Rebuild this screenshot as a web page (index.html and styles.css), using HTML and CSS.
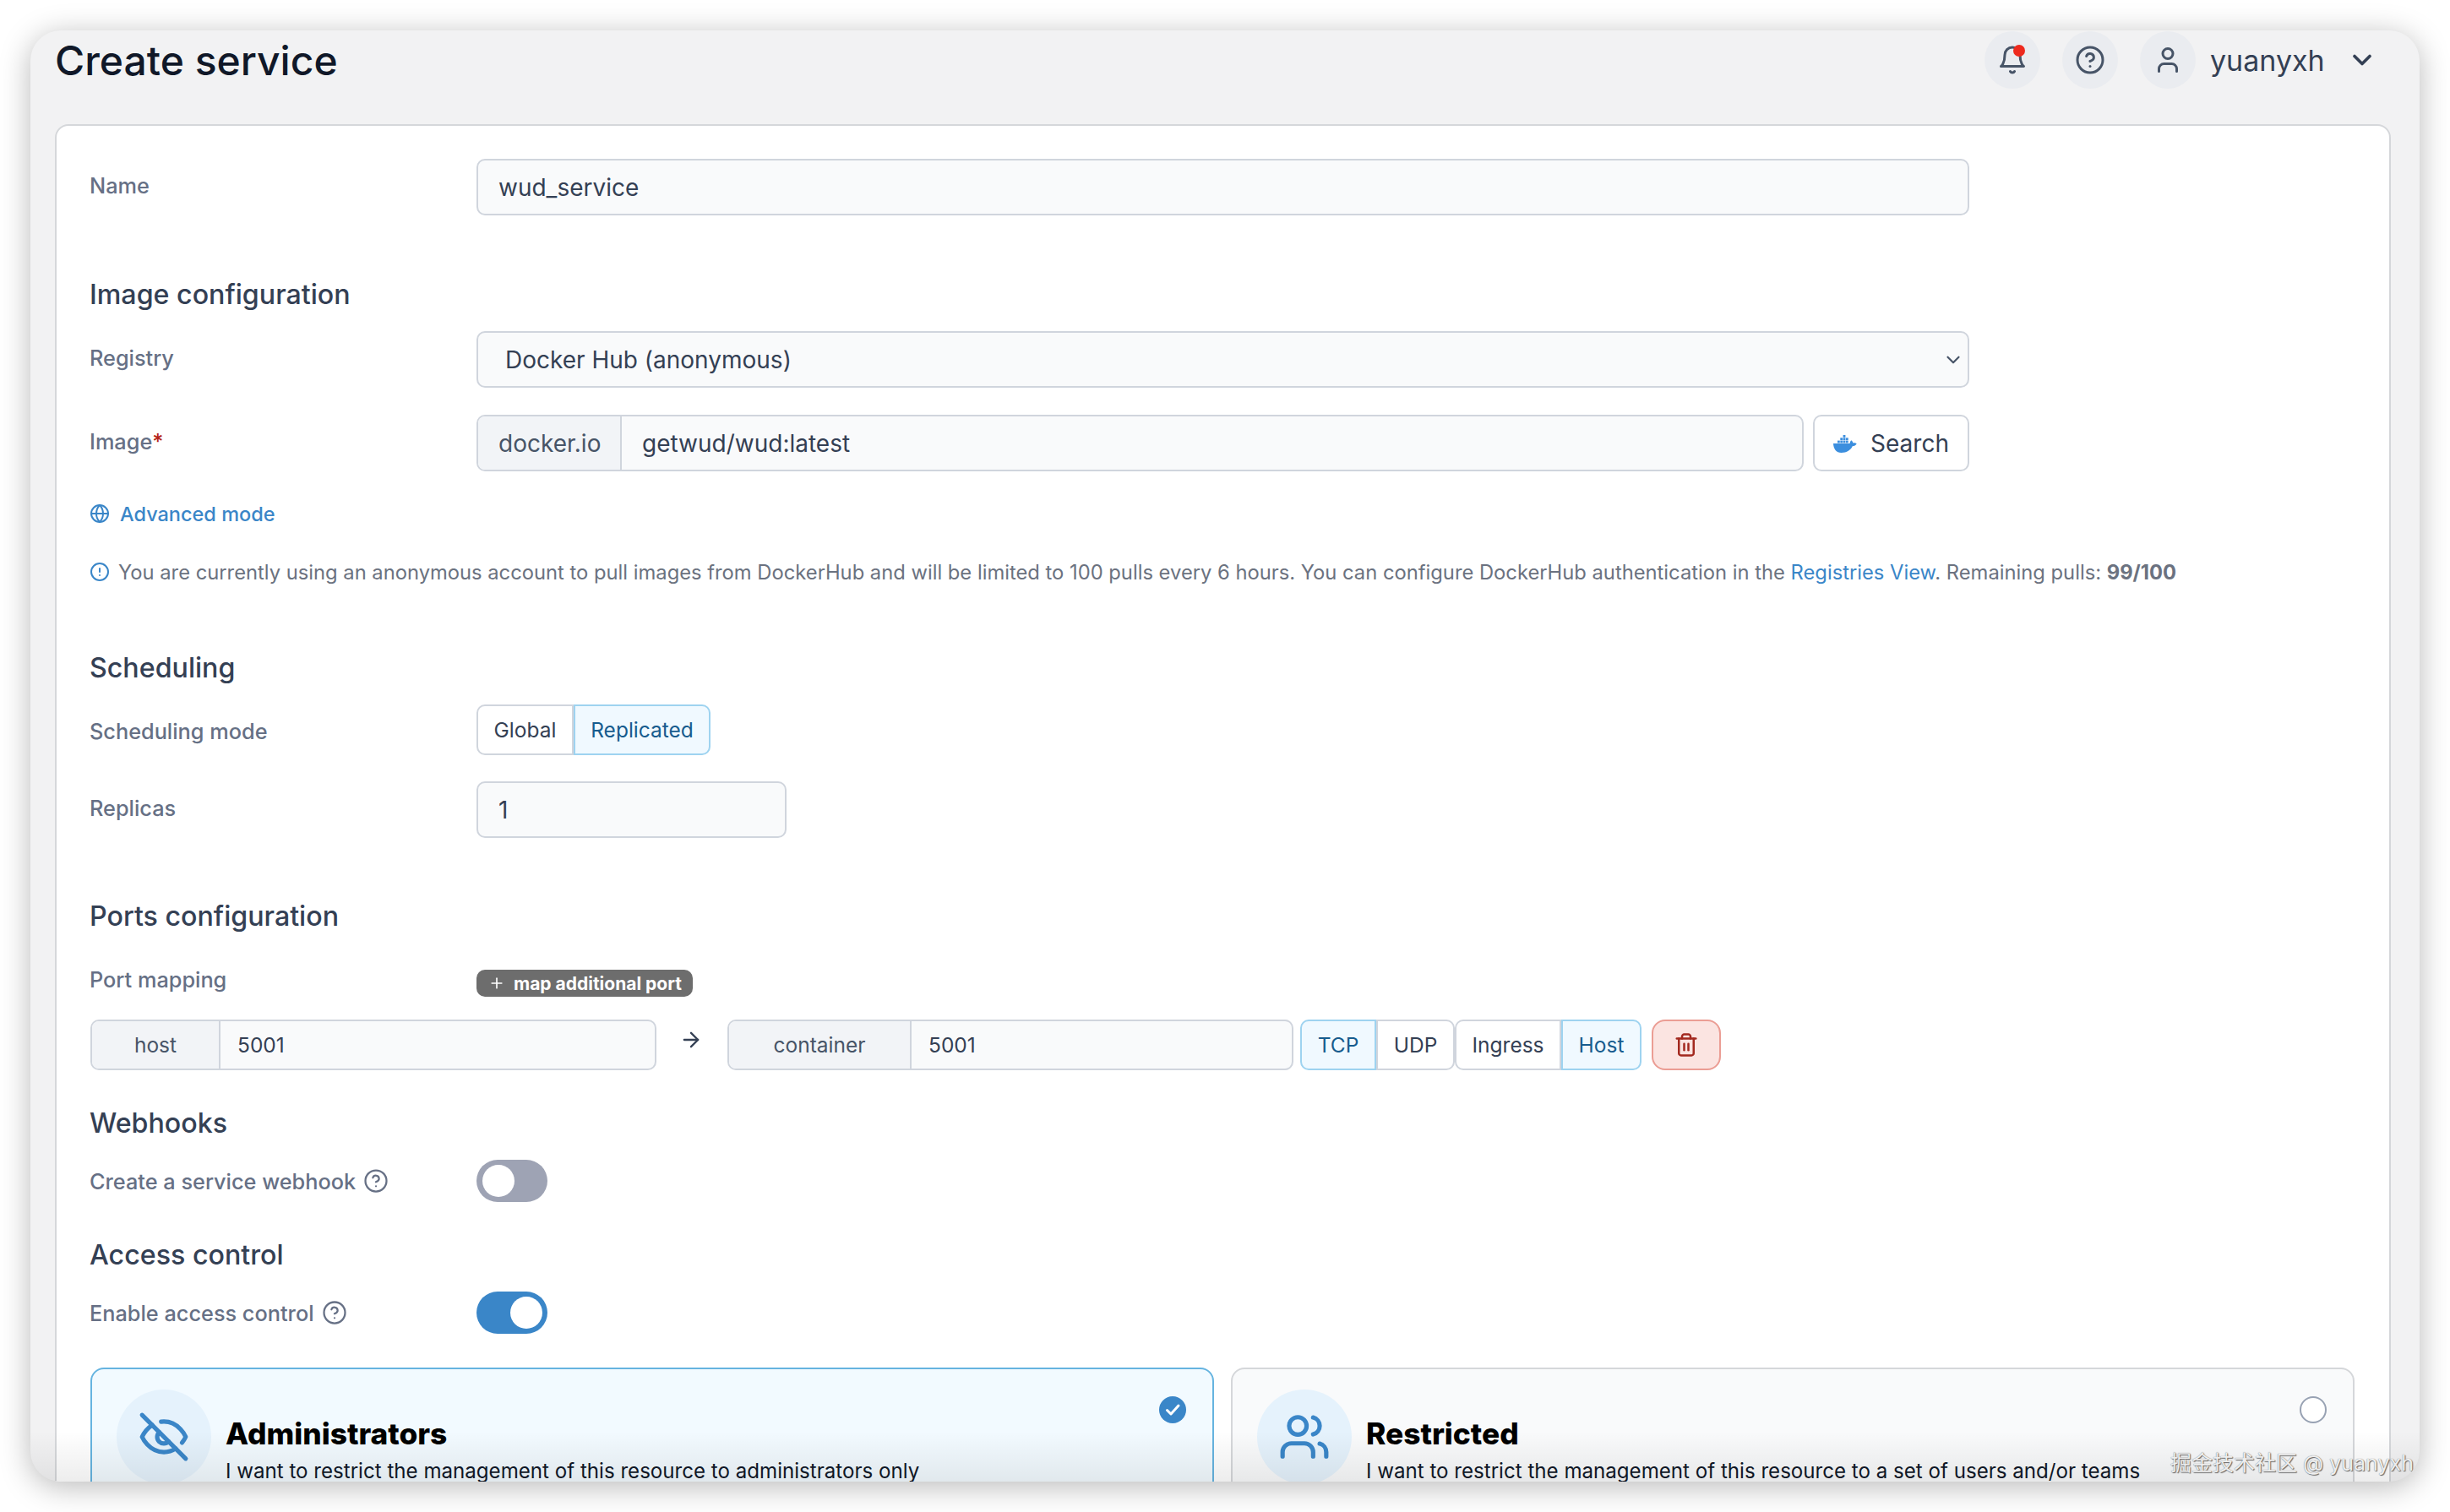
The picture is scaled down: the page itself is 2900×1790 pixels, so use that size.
FILE: index.html
```html
<!DOCTYPE html>
<html lang="en">
<head>
<meta charset="utf-8">
<title>Create service</title>
<link rel="stylesheet" href="styles.css">
</head>
<body>
<div class="window">
  <header class="topbar">
    <h1 class="page-title">Create service</h1>
    <div class="top-actions">
      <span class="round-btn bell">
        <svg class="ic-top" viewBox="0 0 24 24"><path d="M6 8a6 6 0 0 1 12 0c0 7 3 9 3 9H3s3-2 3-9"/><path d="M10.3 21a1.94 1.94 0 0 0 3.4 0"/></svg>
        <span class="dot"></span>
      </span>
      <span class="round-btn">
        <svg class="ic-top" viewBox="0 0 24 24"><circle cx="12" cy="12" r="10"/><path d="M9.09 9a3 3 0 0 1 5.83 1c0 2-3 3-3 3"/><path d="M12 17h.01"/></svg>
      </span>
      <span class="round-btn">
        <svg class="ic-top" viewBox="0 0 24 24"><path d="M19 21v-2a4 4 0 0 0-4-4H9a4 4 0 0 0-4 4v2"/><circle cx="12" cy="7" r="4"/></svg>
      </span>
      <span class="username">yuanyxh</span>
      <svg class="ic-chev" viewBox="0 0 24 24"><path d="m6 9 6 6 6-6"/></svg>
    </div>
  </header>

  <main class="card">
    <div class="row row-name">
      <label class="lbl">Name</label>
      <div class="input wide">wud_service</div>
    </div>

    <h2 class="sec sec-image">Image configuration</h2>
    <div class="row row-registry">
      <label class="lbl">Registry</label>
      <div class="input wide select">
        <span>Docker Hub (anonymous)</span>
        <svg class="ic-sel" viewBox="0 0 24 24"><path d="m6 9 6 6 6-6"/></svg>
      </div>
    </div>
    <div class="row row-image">
      <label class="lbl">Image<span class="req">*</span></label>
      <div class="field">
        <div class="group image-group">
          <span class="addon image-add">docker.io</span>
          <span class="grp-val">getwud/wud:latest</span>
        </div>
        <button class="search-btn">
          <svg class="ic-whale" viewBox="0 0 28 22"><g fill="#3b8ede"><rect x="5" y="7.600" width="2.800" height="2.800"/><rect x="8.300" y="7.600" width="2.800" height="2.800"/><rect x="11.600" y="7.600" width="2.800" height="2.800"/><rect x="14.900" y="7.600" width="2.800" height="2.800"/><rect x="8.300" y="4.300" width="2.800" height="2.800"/><rect x="11.600" y="4.300" width="2.800" height="2.800"/><rect x="14.900" y="4.300" width="2.800" height="2.800"/><rect x="11.600" y="1" width="2.800" height="2.800"/><path d="M0 11h19.500c.2-1.400.8-2.800 1.800-3.800 1.200.9 1.900 2 2.100 3.300 1.400-.5 3-.3 4.300.7-1 2-3 2.800-4.800 2.800C20.800 18.500 16 22 9.500 22 3.500 22 .3 17.500 0 11z"/></g></svg>
          Search
        </button>
      </div>
    </div>

    <a class="adv">
      <svg class="ic-sm" viewBox="0 0 24 24"><circle cx="12" cy="12" r="10"/><path d="M12 2a14.500 14.500 0 0 0 0 20 14.500 14.500 0 0 0 0-20"/><path d="M2 12h20"/></svg>
      Advanced mode
    </a>
    <p class="info">
      <svg class="ic-sm" viewBox="0 0 24 24"><circle cx="12" cy="12" r="10"/><path d="M12 8v4"/><path d="M12 16h.01"/></svg>
      <span>You are currently using an anonymous account to pull images from DockerHub and will be limited to 100 pulls every 6 hours. You can configure DockerHub authentication in the <a class="link">Registries View</a>. Remaining pulls: <b>99/100</b></span>
    </p>

    <h2 class="sec sec-sched">Scheduling</h2>
    <div class="row row-mode">
      <label class="lbl">Scheduling mode</label>
      <div class="btn-group">
        <span class="seg">Global</span>
        <span class="seg on">Replicated</span>
      </div>
    </div>
    <div class="row row-replicas">
      <label class="lbl">Replicas</label>
      <div class="input small">1</div>
    </div>

    <h2 class="sec sec-ports">Ports configuration</h2>
    <div class="row row-portmap">
      <label class="lbl">Port mapping</label>
      <span class="badge">
        <svg class="ic-plus" viewBox="0 0 24 24"><path d="M5 12h14"/><path d="M12 5v14"/></svg>
        map additional port
      </span>
    </div>
    <div class="ports">
      <div class="group port-host">
        <span class="addon center host-add">host</span>
        <span class="grp-val">5001</span>
      </div>
      <svg class="ic-arrow" viewBox="0 0 24 24"><path d="M5 12h14"/><path d="m12 5 7 7-7 7"/></svg>
      <div class="group port-cont">
        <span class="addon center cont-add">container</span>
        <span class="grp-val">5001</span>
      </div>
      <div class="btn-group tall g-proto">
        <span class="seg on">TCP</span>
        <span class="seg">UDP</span>
      </div>
      <div class="btn-group tall g-mode">
        <span class="seg">Ingress</span>
        <span class="seg on">Host</span>
      </div>
      <button class="del">
        <svg class="ic-trash" viewBox="0 0 24 24"><path d="M3 6h18"/><path d="M19 6v14c0 1-1 2-2 2H7c-1 0-2-1-2-2V6"/><path d="M8 6V4c0-1 1-2 2-2h4c1 0 2 1 2 2v2"/><path d="M10 11v6"/><path d="M14 11v6"/></svg>
      </button>
    </div>

    <h2 class="sec sec-web">Webhooks</h2>
    <div class="row row-toggle">
      <label class="lbl">Create a service webhook
        <svg class="ic-help" viewBox="0 0 24 24"><circle cx="12" cy="12" r="10"/><path d="M9.09 9a3 3 0 0 1 5.830 1c0 2-3 3-3 3"/><path d="M12 17h.01"/></svg>
      </label>
      <span class="toggle"><span class="knob"></span></span>
    </div>

    <h2 class="sec sec-access">Access control</h2>
    <div class="row row-toggle">
      <label class="lbl">Enable access control
        <svg class="ic-help" viewBox="0 0 24 24"><circle cx="12" cy="12" r="10"/><path d="M9.09 9a3 3 0 0 1 5.830 1c0 2-3 3-3 3"/><path d="M12 17h.01"/></svg>
      </label>
      <span class="toggle active"><span class="knob"></span></span>
    </div>

    <div class="access-cards">
      <div class="acard selected">
        <span class="acircle">
          <svg class="ic-acc" viewBox="0 0 24 24"><path d="M9.880 9.880a3 3 0 1 0 4.240 4.240"/><path d="M10.730 5.080A10.430 10.430 0 0 1 12 5c7 0 10 7 10 7a13.160 13.160 0 0 1-1.670 2.680"/><path d="M6.610 6.610A13.526 13.526 0 0 0 2 12s3 7 10 7a9.740 9.740 0 0 0 5.390-1.610"/><path d="M2 2l20 20"/></svg>
        </span>
        <div class="atext">
          <div class="atitle">Administrators</div>
          <div class="adesc">I want to restrict the management of this resource to administrators only</div>
        </div>
        <svg class="check" viewBox="0 0 32 32"><circle cx="16" cy="16" r="16" fill="#3a86c8"/><path d="M9.500 16.500l4.500 4.500 9-10" fill="none" stroke="#fff" stroke-width="3" stroke-linecap="round" stroke-linejoin="round"/></svg>
      </div>
      <div class="acard">
        <span class="acircle">
          <svg class="ic-acc" viewBox="0 0 24 24"><path d="M16 21v-2a4 4 0 0 0-4-4H6a4 4 0 0 0-4 4v2"/><circle cx="9" cy="7" r="4"/><path d="M22 21v-2a4 4 0 0 0-3-3.870"/><path d="M16 3.130a4 4 0 0 1 0 7.750"/></svg>
        </span>
        <div class="atext">
          <div class="atitle">Restricted</div>
          <div class="adesc">I want to restrict the management of this resource to a set of users and/or teams</div>
        </div>
        <span class="radio"></span>
      </div>
    </div>
  </main>
  <div class="bottom-fade"></div>
  <span class="watermark">掘金技术社区 @ yuanyxh</span>
</div>
</body>
</html>
```

FILE: styles.css
```css
* { box-sizing: border-box; }
html, body { margin: 0; padding: 0; background: #fff; }
body {
  width: 2900px;
  height: 1790px;
  padding: 36px;
  overflow: hidden;
  font-family: Inter, "Noto Sans CJK SC", sans-serif;
}
.window {
  position: relative;
  width: 2828px;
  height: 1718px;
  background: #f2f2f3;
  border-radius: 36px;
  overflow: hidden;
  box-shadow: 0 6px 36px rgba(0, 0, 0, .28);
}
.topbar {
  display: flex;
  justify-content: space-between;
  align-items: flex-start;
  height: 111px;
  padding: 0 50px 0 29px;
}
.page-title {
  margin: 0;
  font-size: 48px;
  line-height: 72px;
  font-weight: 500;
  color: #101828;
}
.top-actions { display: flex; align-items: center; height: 70px; }
.round-btn {
  position: relative;
  display: flex;
  align-items: center;
  justify-content: center;
  width: 66px;
  height: 68px;
  border-radius: 50%;
  background: #eaecf0;
  margin-right: 26px;
}
.round-btn:nth-child(3) { margin-right: 17px; }
.ic-top { width: 36px; height: 36px; fill: none; stroke: #475467; stroke-width: 2; stroke-linecap: round; stroke-linejoin: round; }
.dot { position: absolute; top: 16px; left: 34px; width: 14px; height: 14px; border-radius: 50%; background: #ee2a1e; }
.username { font-size: 34px; color: #344054; width: 150px; }
.ic-chev { width: 36px; height: 36px; margin-left: 12px; fill: none; stroke: #344054; stroke-width: 2.400; stroke-linecap: round; stroke-linejoin: round; }

.card {
  position: relative;
  margin: 0 34px 0 29px;
  height: 1700px;
  background: #fff;
  border: 2px solid #d5d7da;
  border-radius: 16px;
  padding: 39px 39px 0;
}
.row { display: flex; align-items: center; }
.lbl {
  display: flex;
  align-items: center;
  width: 458px;
  flex: none;
  font-size: 25.300px;
  font-weight: 500;
  color: #667085;
  margin-top: -4px;
}
.req { color: #b42318; }
.input {
  display: flex;
  align-items: center;
  height: 67px;
  padding: 0 24px;
  background: #f9fafb;
  border: 2px solid #d0d5dd;
  border-radius: 10px;
  font-size: 28px;
  color: #344054;
}
.wide { width: 1767px; }
.small { width: 367px; }
.select { justify-content: space-between; padding: 0 4px 0 32px; }
.ic-sel { width: 26px; height: 26px; fill: none; stroke: #475467; stroke-width: 2; stroke-linecap: round; stroke-linejoin: round; }
.sec {
  margin: 0;
  font-size: 32.200px;
  line-height: 44px;
  font-weight: 500;
  color: #344054;
}
.sec-image { margin-top: 72px; margin-bottom: 21px; }
.row-image { margin-top: 32px; }
.field { display: flex; gap: 11px; width: 1767px; }
.group {
  display: flex;
  height: 67px;
  background: #f9fafb;
  border: 2px solid #d0d5dd;
  border-radius: 10px;
  overflow: hidden;
  font-size: 28px;
  color: #344054;
}
.addon {
  display: flex;
  align-items: center;
  padding: 0 24px;
  background: #f2f4f7;
  border-right: 2px solid #d0d5dd;
  color: #475467;
}
.image-add { width: 170px; flex: none; }
.grp-val { display: flex; align-items: center; padding: 0 24px; }
.image-group { flex: 1; }
.search-btn {
  display: flex;
  align-items: center;
  justify-content: center;
  gap: 16px;
  width: 185px;
  height: 67px;
  background: #fff;
  border: 2px solid #d0d5dd;
  border-radius: 10px;
  font: 400 28px Inter, sans-serif;
  color: #344054;
  padding: 0;
}
.ic-whale { width: 28px; height: 22px; }
.adv {
  display: flex;
  align-items: center;
  gap: 12px;
  margin-top: 32px;
  height: 36px;
  font-size: 23.500px;
  font-weight: 500;
  color: #3a86c8;
}
.ic-sm { width: 24px; height: 24px; flex: none; fill: none; stroke: #3a86c8; stroke-width: 2; stroke-linecap: round; stroke-linejoin: round; }
.info {
  display: flex;
  align-items: center;
  gap: 10px;
  margin: 33px 0 0;
  height: 36px;
  font-size: 23.760px;
  color: #6b7280;
  white-space: nowrap;
}
.link { color: #3a86c8; }
.info b { font-weight: 700; color: #6b7280; }
.sec-sched { margin-top: 74px; margin-bottom: 21px; }
.btn-group { display: flex; height: 60px; border-radius: 10px; }
.seg {
  display: flex;
  align-items: center;
  justify-content: center;
  font-size: 24.500px;
  font-weight: 400;
  color: #344054;
  background: #fff;
  border: 2px solid #d0d5dd;
  padding: 0 20px;
}
.seg:first-child { border-radius: 10px 0 0 10px; }
.seg:last-child { border-radius: 0 10px 10px 0; }
.seg.on { background: #f0f9ff; border-color: #9ed3f0; color: #175c8e; }
.row-mode .lbl { margin-top: 2px; }
.row-mode .seg:first-child { width: 115px; }
.row-mode .seg:last-child { width: 162px; }
.row-replicas { margin-top: 31px; }
.sec-ports { margin-top: 71px; margin-bottom: 41px; }
.badge {
  display: flex;
  align-items: center;
  gap: 10px;
  height: 32px;
  width: 256px;
  padding: 0 14px;
  background: #6d6d6d;
  border-radius: 10px;
  color: #fff;
  font-size: 21px;
  font-weight: 700;
  white-space: nowrap;
}
.row-portmap .lbl { margin-top: -10px; }
.ic-plus { width: 20px; height: 20px; flex: none; fill: none; stroke: #fff; stroke-width: 2; stroke-linecap: round; }
.ports { display: flex; align-items: flex-start; margin: 27px 0 0 1px; }
.ports .group { height: 60px; font-size: 24.500px; }
.port-host { width: 670px; }
.port-cont { width: 670px; }
.host-add { width: 152px; padding: 0; justify-content: center; }
.cont-add { width: 216px; padding: 0; justify-content: center; }
.ports .grp-val { padding: 0 20px; }
.ic-arrow { width: 28px; height: 28px; margin: 10px 29px 0 27px; fill: none; stroke: #344054; stroke-width: 2; stroke-linecap: round; stroke-linejoin: round; }
.g-proto { margin-left: 8px; }
.g-proto .seg:first-child { width: 90px; }
.g-proto .seg:last-child { width: 93px; }
.g-mode .seg:first-child { width: 126px; }
.g-mode .seg:last-child { width: 95px; }
.del {
  display: flex;
  align-items: center;
  justify-content: center;
  width: 82px;
  height: 60px;
  margin-left: 12px;
  padding: 0;
  background: #fbe4e1;
  border: 2px solid #eb9d94;
  border-radius: 16px;
}
.ic-trash { width: 30px; height: 30px; fill: none; stroke: #a3291f; stroke-width: 2; stroke-linecap: round; stroke-linejoin: round; }
.sec-web { margin-top: 41px; margin-bottom: 21px; }
.sec-access { margin-top: 41px; margin-bottom: 21px; }
.row-toggle { height: 50px; }
.row-toggle .lbl { margin-top: 0; }
.ic-help { width: 30px; height: 30px; margin-left: 9px; fill: none; stroke: #667085; stroke-width: 1.800; stroke-linecap: round; stroke-linejoin: round; }
.toggle {
  display: block;
  width: 84px;
  height: 50px;
  border-radius: 25px;
  background: #9ea3b4;
  padding: 6px 7px;
}
.knob { display: block; width: 38px; height: 38px; border-radius: 50%; background: #fff; }
.toggle.active { background: #3a86c8; }
.toggle.active .knob { margin-left: 33px; }
.access-cards { display: flex; gap: 20px; margin: 40px 0 0 1px; }
.acard {
  position: relative;
  flex: none;
  display: flex;
  width: 1330px;
  height: 200px;
  padding: 24px 29px;
  background: #f9fafb;
  border: 2px solid #d5d7da;
  border-radius: 16px;
}
.acard.selected { background: #f2faff; border-color: #66b4e0; }
.acircle {
  flex: none;
  display: flex;
  align-items: center;
  justify-content: center;
  width: 112px;
  height: 112px;
  border-radius: 50%;
  background: #e5f2fc;
}
.ic-acc { width: 62px; height: 62px; fill: none; stroke: #3a86c8; stroke-width: 2; stroke-linecap: round; stroke-linejoin: round; }
.atext { margin-left: 17px; padding-top: 31px; }
.atitle { font-size: 35.300px; line-height: 44px; font-weight: 800; color: #000; }
.adesc { margin-top: 7px; font-size: 24.120px; line-height: 30px; color: #101828; white-space: nowrap; }
.check { position: absolute; top: 32px; right: 31px; width: 32px; height: 32px; }
.radio { position: absolute; top: 32px; right: 31px; width: 32px; height: 32px; border-radius: 50%; border: 2px solid #98a2b3; background: #fff; }
.bottom-fade {
  position: absolute;
  left: 0;
  right: 0;
  bottom: 0;
  height: 60px;
  background: linear-gradient(to bottom, rgba(0,0,0,0), rgba(0,0,0,.07));
  pointer-events: none;
}
.watermark {
  position: absolute;
  right: 7px;
  bottom: 6px;
  font-size: 25px;
  color: #eee;
  text-shadow: 1px 1px 1px #666, 0 0 1px #666;
  white-space: nowrap;
}
```
